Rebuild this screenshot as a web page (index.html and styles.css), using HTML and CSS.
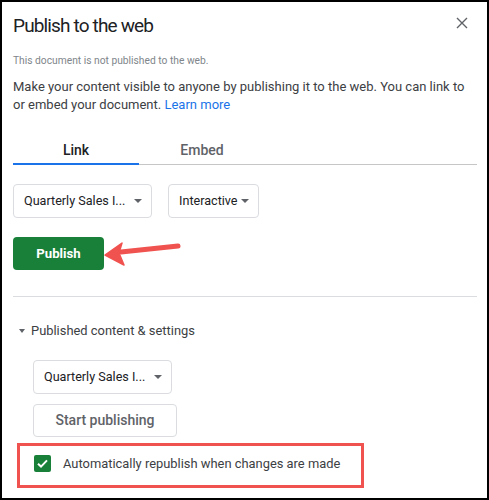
FILE: index.html
```html
<!DOCTYPE html>
<html>
<head>
<meta charset="utf-8">
<link rel="stylesheet" href="styles.css">
</head>
<body>
<div class="dialog">
  <div class="header">
    <h1 class="title">Publish to the web</h1>
    <button class="close" aria-label="Close">
      <svg width="12" height="12" viewBox="0 0 12 12"><path d="M1 1L11 11M11 1L1 11" stroke="#5f6368" stroke-width="1.4" fill="none"/></svg>
    </button>
  </div>
  <p class="status">This document is not published to the web.</p>
  <p class="intro"><span>Make your content visible to anyone by publishing it to the web. You can link to</span><br><span>or embed your document.</span> <a class="link" href="#">Learn more</a></p>

  <div class="tabs">
    <div class="tab active">Link</div>
    <div class="tab">Embed</div>
    <div class="tab-rest"></div>
  </div>

  <div class="selects">
    <div class="select sel-doc"><span>Quarterly Sales I...</span><span class="caret"></span></div>
    <div class="select sel-mode"><span>Interactive</span><span class="caret"></span></div>
  </div>

  <div class="publish-row">
    <button class="publish">Publish</button>
    <svg class="arrow" width="90" height="34" viewBox="0 0 90 34">
      <line x1="18" y1="15" x2="75" y2="9" stroke="#f0524f" stroke-width="5" stroke-linecap="round"/>
      <path d="M2 18 L19 6 L16 16 L21 28 Z" fill="#f0524f" stroke="#f0524f" stroke-width="1.5" stroke-linejoin="round"/>
    </svg>
  </div>

  <div class="divider"></div>

  <div class="toggle"><span class="tri"></span>Published content &amp; settings</div>

  <div class="settings">
    <div class="select sel-doc"><span>Quarterly Sales I...</span><span class="caret"></span></div>
    <button class="start">Start publishing</button>
  </div>

  <div class="highlight">
    <span class="checkbox">
      <svg width="17" height="17" viewBox="0 0 17 17"><path d="M4 8.8L7 11.6L13 5.4" stroke="#fff" stroke-width="2" fill="none"/></svg>
    </span>
    <span class="check-label">Automatically republish when changes are made</span>
  </div>
</div>
</body>
</html>
```

FILE: styles.css
```css
* { box-sizing: border-box; }
html, body { margin: 0; padding: 0; background: #fff; }
body {
  font-family: Roboto, "Liberation Sans", Arial, sans-serif;
  color: #202124;
}
.dialog {
  width: 489px;
  height: 500px;
  border: 2px solid #000;
  padding: 0 10px 0 11px;
  overflow: hidden;
}
.header {
  display: flex;
  align-items: flex-start;
  justify-content: space-between;
  padding-top: 10px;
}
.title {
  margin: 0;
  font-size: 19px;
  letter-spacing: -0.85px;
  line-height: 28px;
  font-weight: 400;
  color: #202124;
}
.close {
  border: 0;
  background: none;
  padding: 0;
  margin: 5px 9px 0 0;
  width: 12px;
  height: 12px;
  display: flex;
}
.status {
  margin: 13.5px 0 0;
  font-size: 10.25px;
  line-height: 14px;
  color: #80868b;
}
.intro {
  margin: 10px 0 0;
  font-size: 13px;
  line-height: 18px;
  color: #3c4043;
  white-space: nowrap;
}
.link { color: #1a73e8; text-decoration: none; }

.tabs {
  display: flex;
  margin-top: 26px;
}
.tab {
  width: 126px;
  text-align: center;
  font-size: 14px;
  line-height: 20px;
  font-weight: 500;
  color: #5f6368;
  padding-bottom: 4px;
  border-bottom: 1px solid #c4c7c5;
}
.tab.active {
  color: #202124;
  padding-bottom: 3px;
  border-bottom: 2px solid #1a73e8;
}
.tab-rest {
  flex: 1;
  border-bottom: 1px solid #c4c7c5;
}

.selects {
  display: flex;
  gap: 16px;
  margin-top: 19px;
}
.select {
  display: flex;
  align-items: center;
  justify-content: space-between;
  height: 34px;
  border: 1px solid #dadce0;
  border-radius: 4px;
  padding: 0 9px 0 10px;
  font-size: 12.6px;
  white-space: nowrap;
  color: #202124;
}
.sel-doc { width: 139px; }
.sel-mode { width: 91px; }
.caret {
  width: 0; height: 0;
  border-left: 4px solid transparent;
  border-right: 4px solid transparent;
  border-top: 4px solid #5f6368;
}

.publish-row {
  position: relative;
  margin-top: 19px;
  height: 33px;
}
.publish {
  width: 91px;
  height: 33px;
  border: 0;
  border-radius: 4px;
  background: #188038;
  color: #fff;
  font-family: inherit;
  font-size: 13.2px;
  font-weight: 700;
  padding: 0;
}
.arrow {
  position: absolute;
  left: 90px;
  top: 0;
}

.divider {
  margin-top: 26px;
  border-top: 1px solid #dadce0;
}

.toggle {
  display: flex;
  align-items: center;
  margin-top: 24px;
  padding-left: 6px;
  font-size: 12.9px;
  line-height: 20px;
  color: #3c4043;
}
.tri {
  width: 0; height: 0;
  border-left: 3.5px solid transparent;
  border-right: 3.5px solid transparent;
  border-top: 4px solid #5f6368;
  margin-right: 6px;
}

.settings {
  display: flex;
  flex-direction: column;
  align-items: flex-start;
  gap: 10px;
  margin-top: 19px;
  padding-left: 20px;
}
.start {
  width: 144px;
  height: 33px;
  border: 1px solid #dadce0;
  border-radius: 4px;
  background: #fff;
  font-family: inherit;
  font-size: 14px;
  font-weight: 500;
  color: #5f6368;
  padding: 0;
}

.highlight {
  display: flex;
  align-items: center;
  width: 347px;
  height: 45px;
  margin: 6px 0 0 4px;
  border: 3px solid #f0524f;
  padding: 0 0 3px 14px;
}
.checkbox {
  width: 17px;
  height: 17px;
  border-radius: 2px;
  background: #188038;
  display: flex;
  margin-right: 12px;
}
.check-label {
  font-size: 12.9px;
  color: #3c4043;
  white-space: nowrap;
}
```
